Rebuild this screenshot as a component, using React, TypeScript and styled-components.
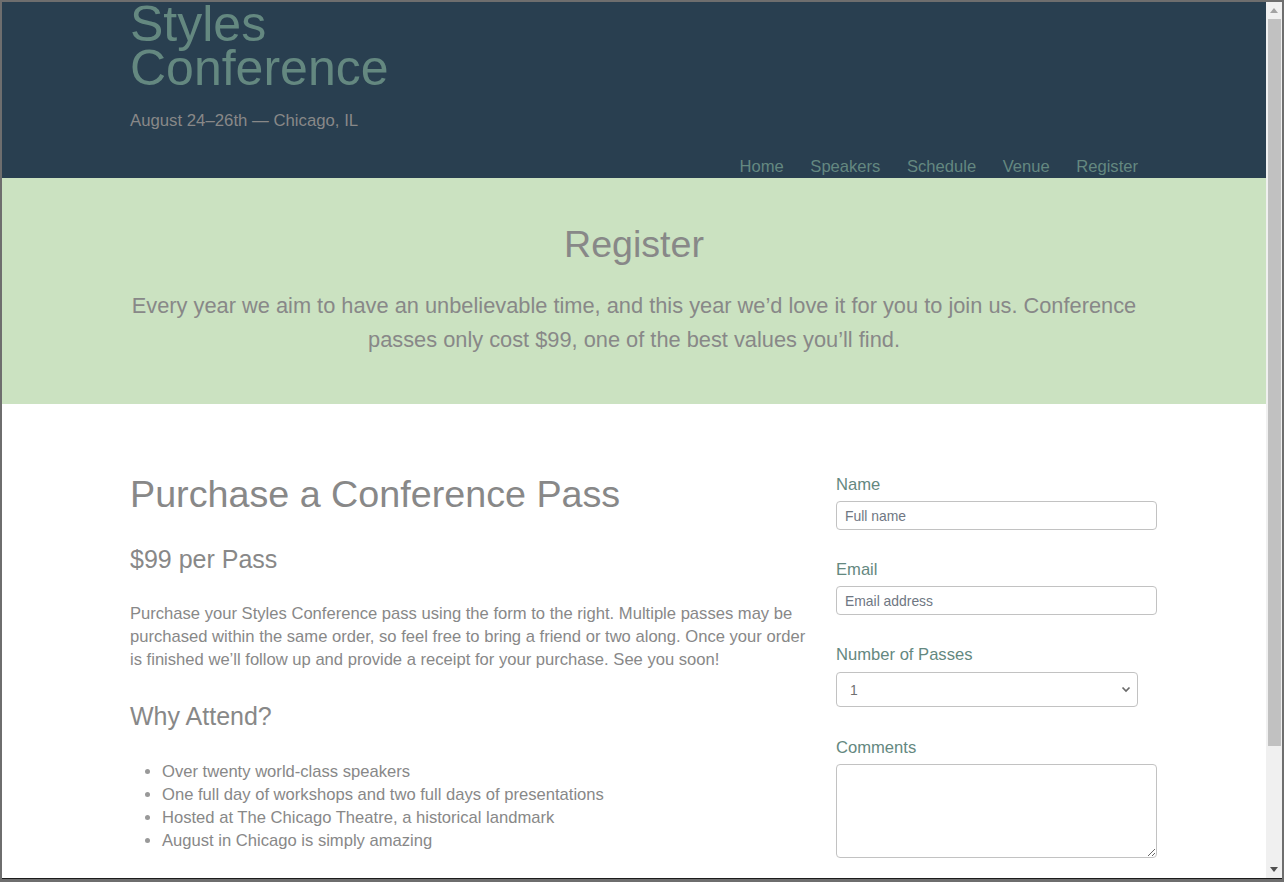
import React from "react";
import styled, { createGlobalStyle } from "styled-components";

const Global = createGlobalStyle`
  * { box-sizing: border-box; }
  html, body { margin: 0; padding: 0; background: #6e6e6e; }
  body { font-family: "Liberation Sans", Arial, sans-serif; color: #888; }
`;

const Window = styled.div`
  width: 1284px;
  height: 882px;
  border-style: solid;
  border-color: #6e6e6e;
  border-width: 2px 2px 3px 2px;
  display: flex;
  flex-direction: column;
  overflow: hidden;
`;

const Body = styled.div`
  height: 876px;
  display: flex;
`;

const BottomEdge = styled.div`
  height: 1px;
  background: #1c1c1c;
`;

const Viewport = styled.div`
  flex: 1;
  overflow: hidden;
  background: #fff;
`;

const Scrollbar = styled.div`
  width: 16px;
  background: #f0f0f0;
  display: flex;
  flex-direction: column;
`;

const ArrowBtn = styled.div`
  height: 17px;
  display: flex;
  align-items: center;
  justify-content: center;
`;

const Track = styled.div`
  flex: 1;
  display: flex;
  flex-direction: column;
`;

const Thumb = styled.div`
  height: 727px;
  margin-left: 2px;
  width: 13px;
  background: #c1c1c1;
`;

const Container = styled.div`
  width: 1008px;
  margin: 0 auto;
`;

const Header = styled.header`
  background: #293f50;
  height: 176px;
`;

const HeaderInner = styled(Container)`
  display: flex;
  flex-direction: column;
`;

const Logo = styled.h1`
  margin: 0;
  font-weight: normal;
  font-size: 50px;
  line-height: 44px;
  color: #648880;
`;

const Tagline = styled.p`
  margin: 19.5px 0 0;
  font-size: 16.75px;
  line-height: 22px;
  color: #888;
`;

const Nav = styled.nav`
  margin-top: 24px;
  display: flex;
  justify-content: flex-end;
  gap: 26.5px;
`;

const NavLink = styled.a`
  font-size: 16.6px;
  line-height: 22px;
  color: #648880;
  text-decoration: none;
`;

const Hero = styled.section`
  background: #cbe2c1;
  padding: 45.6px 0 47.4px;
  text-align: center;
`;

const HeroTitle = styled.h2`
  margin: 0 0 25px;
  font-weight: normal;
  font-size: 37.6px;
  line-height: 40px;
  color: #888;
`;

const HeroText = styled.p`
  margin: 0;
  font-size: 21.8px;
  line-height: 34px;
  color: #888;
`;

const Main = styled.section`
  padding-top: 69.6px;
`;

const Grid = styled(Container)`
  display: grid;
  grid-template-columns: 686px 321px;
  column-gap: 20px;
  align-items: start;
`;

const Column = styled.div`
  display: flex;
  flex-direction: column;
`;

const PageTitle = styled.h1`
  margin: 0 0 29.6px;
  font-weight: normal;
  font-size: 37.7px;
  line-height: 40px;
  color: #888;
`;

const SubTitle = styled.h3<{ $mb: number }>`
  margin: 0 0 ${(p) => p.$mb}px;
  font-weight: normal;
  font-size: 25px;
  line-height: 33px;
  color: #888;
`;

const Copy = styled.p`
  margin: 0 0 28px;
  font-size: 16.6px;
  line-height: 23.3px;
  color: #888;
`;

const List = styled.ul`
  margin: 0;
  padding-left: 32px;
  font-size: 16.6px;
  line-height: 23px;
  color: #888;
  li::marker { color: #999; }
`;

const Form = styled.form`
  display: flex;
  flex-direction: column;
  gap: 28.5px;
`;

const Field = styled.div<{ $extra?: number }>`
  display: flex;
  flex-direction: column;
  gap: 5.5px;
  margin-bottom: ${(p) => p.$extra ?? 0}px;
`;

const Label = styled.label`
  font-size: 16.6px;
  line-height: 22px;
  color: #648880;
`;

const TextInput = styled.input`
  width: 321px;
  height: 29px;
  border: 1px solid #c2c2c2;
  border-radius: 4px;
  padding: 0 8px;
  font-family: "Liberation Sans", Arial, sans-serif;
  font-size: 13.9px;
  color: #555;
  background: #fff;
  outline: none;
  &::placeholder { color: #6f7783; opacity: 1; }
`;

const SelectWrap = styled.div`
  position: relative;
  width: 302px;
  height: 35px;
  margin-top: 1px;
`;

const Select = styled.select`
  appearance: none;
  width: 100%;
  height: 100%;
  border: 1px solid #c2c2c2;
  border-radius: 4px;
  padding: 0 13px;
  font-family: "Liberation Sans", Arial, sans-serif;
  font-size: 13.9px;
  color: #707070;
  background: #fff;
  outline: none;
`;

const Chevron = styled.svg`
  position: absolute;
  right: 7px;
  top: 14px;
  pointer-events: none;
`;

const TextArea = styled.textarea`
  width: 321px;
  height: 94px;
  border: 1px solid #c2c2c2;
  border-radius: 4px;
  padding: 6px 8px;
  font-family: "Liberation Sans", Arial, sans-serif;
  font-size: 13.9px;
  background: #fff;
  outline: none;
  resize: both;
`;

export default function App() {
  return (
    <>
      <Global />
      <Window>
        <Body>
          <Viewport>
            <Header>
              <HeaderInner>
                <Logo>
                  Styles
                  <br />
                  Conference
                </Logo>
                <Tagline>August 24–26th — Chicago, IL</Tagline>
                <Nav>
                  {["Home", "Speakers", "Schedule", "Venue", "Register"].map((n) => (
                    <NavLink key={n} href="#">
                      {n}
                    </NavLink>
                  ))}
                </Nav>
              </HeaderInner>
            </Header>
            <Hero>
              <Container>
                <HeroTitle>Register</HeroTitle>
                <HeroText>
                  Every year we aim to have an unbelievable time, and this year we’d love it for you to join us. Conference passes only cost $99, one of the best values you’ll find.
                </HeroText>
              </Container>
            </Hero>
            <Main>
              <Grid>
                <Column>
                  <PageTitle>Purchase a Conference Pass</PageTitle>
                  <SubTitle $mb={25.7}>$99 per Pass</SubTitle>
                  <Copy>
                    Purchase your Styles Conference pass using the form to the right. Multiple passes may be purchased within the same order, so feel free to bring a friend or two along. Once your order is finished we’ll follow up and provide a receipt for your purchase. See you soon!
                  </Copy>
                  <SubTitle $mb={27}>Why Attend?</SubTitle>
                  <List>
                    <li>Over twenty world-class speakers</li>
                    <li>One full day of workshops and two full days of presentations</li>
                    <li>Hosted at The Chicago Theatre, a historical landmark</li>
                    <li>August in Chicago is simply amazing</li>
                  </List>
                </Column>
                <Form onSubmit={(e) => e.preventDefault()}>
                  <Field>
                    <Label htmlFor="name">Name</Label>
                    <TextInput id="name" type="text" placeholder="Full name" />
                  </Field>
                  <Field>
                    <Label htmlFor="email">Email</Label>
                    <TextInput id="email" type="email" placeholder="Email address" />
                  </Field>
                  <Field $extra={1}>
                    <Label htmlFor="quantity">Number of Passes</Label>
                    <SelectWrap>
                      <Select id="quantity" defaultValue="1">
                        <option value="1">1</option>
                        <option value="2">2</option>
                        <option value="3">3</option>
                        <option value="4">4</option>
                        <option value="5">5</option>
                      </Select>
                      <Chevron width="10" height="7" viewBox="0 0 10 7">
                        <path d="M1.5 1.5 L5 5 L8.5 1.5" fill="none" stroke="#6a6a6a" strokeWidth="1.7" />
                      </Chevron>
                    </SelectWrap>
                  </Field>
                  <Field>
                    <Label htmlFor="comments">Comments</Label>
                    <TextArea id="comments" />
                  </Field>
                </Form>
              </Grid>
            </Main>
          </Viewport>
          <Scrollbar>
            <ArrowBtn>
              <svg width="8" height="5" viewBox="0 0 8 5">
                <polygon points="0,5 8,5 4,0" fill="#a3a3a3" />
              </svg>
            </ArrowBtn>
            <Track>
              <Thumb />
            </Track>
            <ArrowBtn>
              <svg width="8" height="5" viewBox="0 0 8 5">
                <polygon points="0,0 8,0 4,5" fill="#505050" />
              </svg>
            </ArrowBtn>
          </Scrollbar>
        </Body>
        <BottomEdge />
      </Window>
    </>
  );
}
